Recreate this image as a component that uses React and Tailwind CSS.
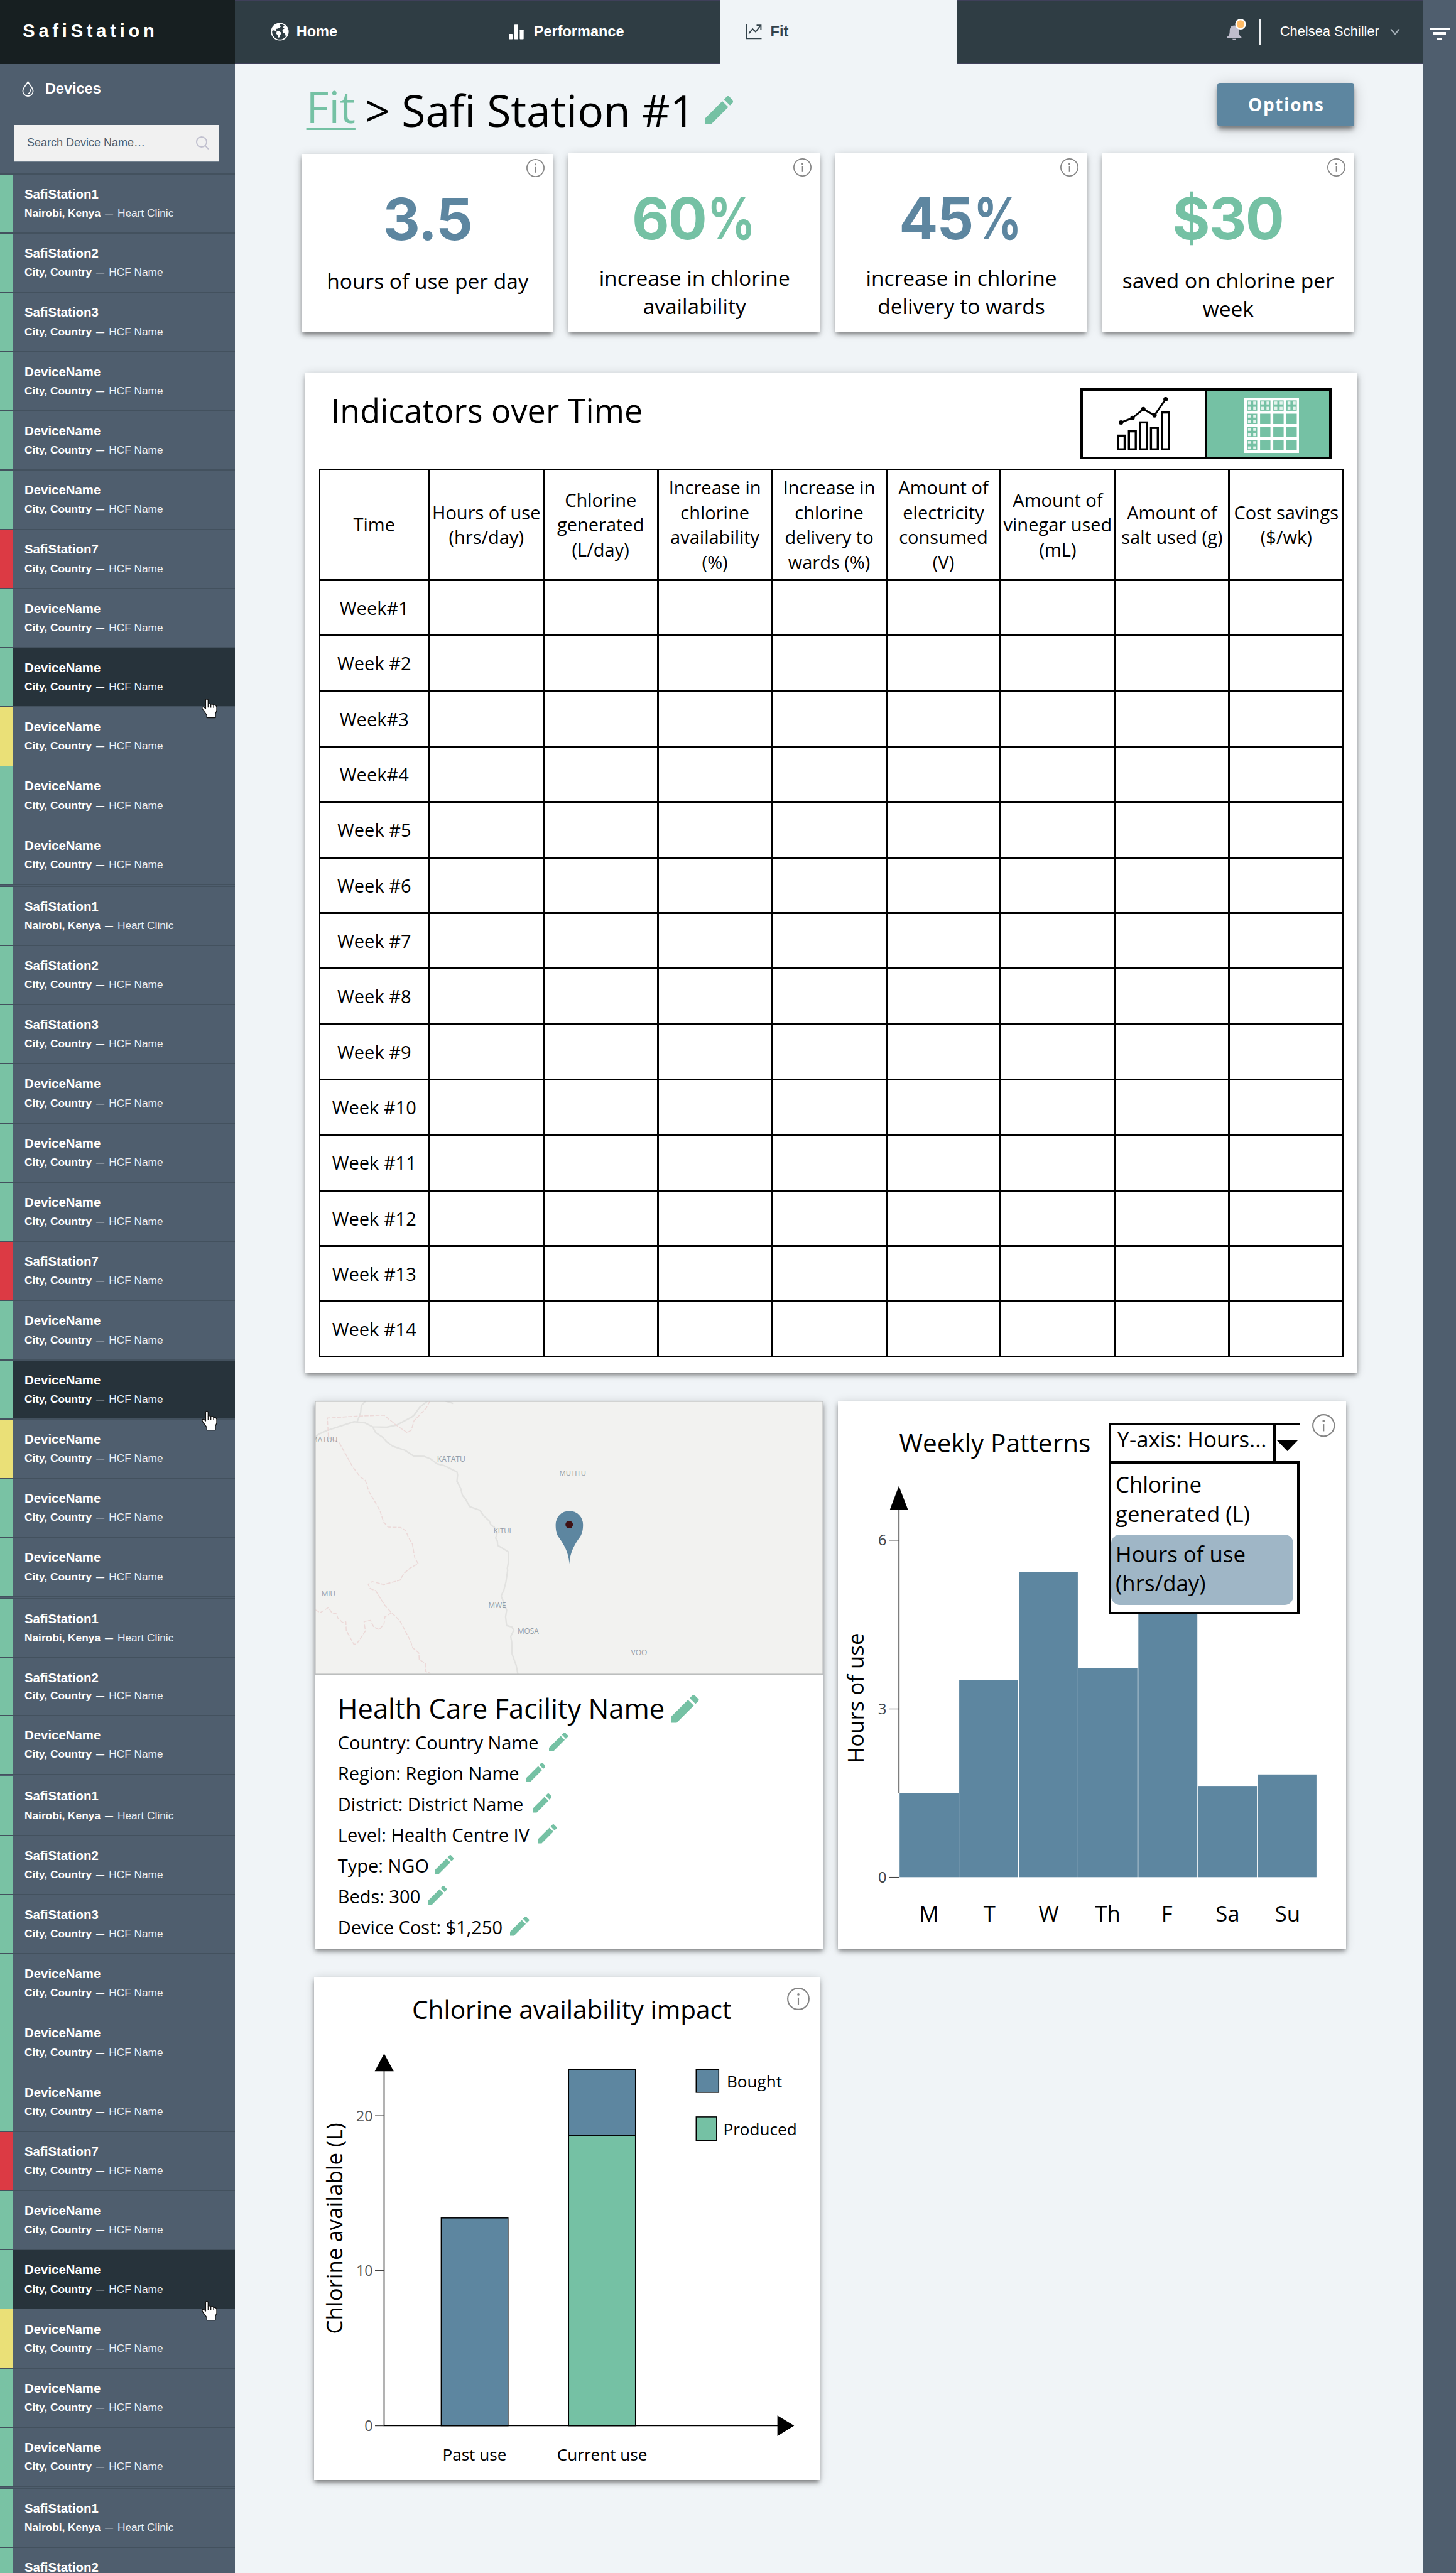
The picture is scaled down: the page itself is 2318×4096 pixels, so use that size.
import React from "react";

const BLUE = "#5d86a0";
const GREEN = "#75c1a4";
const OPEN = '"Open Sans", sans-serif';
const cardShadow =
  "shadow-[0_5px_7px_-1px_rgba(0,0,0,0.42),0_2px_14px_rgba(0,0,0,0.16)]";

/* ---------- icons ---------- */

function Pencil({ className = "" }) {
  return (
    <svg viewBox="3 3 18 18" className={"block shrink-0 " + className} fill={GREEN}>
      <path d="M3 17.25V21h3.75L17.81 9.94l-3.75-3.75L3 17.25z" />
      <path d="M20.71 7.04a1 1 0 0 0 0-1.41l-2.34-2.34a1 1 0 0 0-1.41 0l-1.83 1.83 3.75 3.75 1.83-1.83z" />
    </svg>
  );
}

function Info({ className = "" }) {
  return (
    <svg viewBox="0 0 29 29" className={"absolute block " + className} fill="none" stroke="#858585">
      <circle cx="14.5" cy="14.5" r="13.6" strokeWidth="1.7" />
      <path d="M14.5 12.8V21.8" strokeWidth="1.7" />
      <circle cx="14.5" cy="8.8" r="1.5" fill="#858585" stroke="none" />
    </svg>
  );
}

function Globe() {
  return (
    <svg viewBox="0 0 29 29" className="block h-[29px] w-[29px] shrink-0">
      <circle cx="14.5" cy="14.5" r="13.2" fill="none" stroke="#fff" strokeWidth="1.8" />
      <path
        fill="#fff"
        d="M3 9C5 5 8 2.500 12.500 1.800L15 3.200L13.800 5L16 6.200L14 8.200L12 8L10.200 10L8.500 9.600L7.600 11.600L9.400 13L8 13.600L5.500 12.200L3.200 12.600L1.800 13.500Z"
      />
      <path fill="#fff" d="M9.500 14L13 13.600L16.400 15.800L16.800 17.600L14.600 20L13.800 23.200L12.400 24L11 20.200L8.800 17.400Z" />
      <path
        fill="#fff"
        d="M20 6.500L22.600 5L25.500 8L27.400 12.500L27.400 17L25.200 20.500L23.600 21L22.800 17.200L19.600 16L18.400 13.200L19.600 10.600L22 9.600L19.800 8.600Z"
      />
    </svg>
  );
}

function Bars() {
  return (
    <svg viewBox="0 0 24 24" className="block h-[24px] w-[24px] shrink-0" fill="#fff">
      <rect x="0" y="15" width="6.200" height="8.600" rx="1" />
      <rect x="8.700" y="0.300" width="6.200" height="23.300" rx="1" />
      <rect x="17.500" y="8.200" width="6.200" height="15.400" rx="1" />
    </svg>
  );
}

function Trend() {
  return (
    <svg viewBox="0 0 26 24" className="block h-[24px] w-[26px] shrink-0" fill="none" stroke="#33424a">
      <path d="M1 0V22.200H25.500" strokeWidth="2" />
      <path d="M5 14.500L11.200 7.200L16 11.500L23.500 2" strokeWidth="2" />
      <path d="M17.500 1.200H24.400V8.500" strokeWidth="2" />
    </svg>
  );
}

function Hand() {
  return (
    <svg
      viewBox="0 0 17 22"
      className="absolute left-[320.5px] top-[82px] z-10 block h-[32px] w-[25px]"
      stroke="#111"
      strokeWidth="0.9"
      strokeLinejoin="round"
    >
      <path
        fill="#fff"
        d="M4.300 1.600Q4.300 0.500 5.600 0.500T7 1.600V5.600Q9.300 4.900 10 6.200Q12.300 5.600 13 7.200Q15.800 6.800 16.400 9.200V13.500L15 16.500V21H5.600V18.200L1.600 12.600Q0 10.400 0.700 9.400Q2 8.400 4.300 11Z"
      />
      <path fill="none" d="M7 5.600V9.800M10 6.200V10M13 7.200V10.200" />
    </svg>
  );
}

function GrowthIcon() {
  const bars = [
    [0, 59.9],
    [17.7, 53],
    [35.2, 38.8],
    [52.8, 47.6],
    [70.4, 23],
  ];
  const pts = [
    [6.7, 40.5],
    [25, 33.3],
    [42.2, 19.4],
    [60, 29.1],
    [77.7, 3.5],
  ];
  return (
    <svg viewBox="0 0 85 85" className="block h-[85px] w-[85px]">
      {bars.map(([x, y]) => (
        <rect key={x} x={x + 1.6} y={y + 1.6} width="10.9" height={83.2 - y - 1.6} fill="#fff" stroke="#000" strokeWidth="3.400" />
      ))}
      <polyline points={pts.map((p) => p.join(",")).join(" ")} fill="none" stroke="#000" strokeWidth="3" />
      {pts.map(([x, y]) => (
        <circle key={x} cx={x} cy={y} r="3.600" />
      ))}
    </svg>
  );
}

function GridIcon() {
  const at = [4, 25.1, 46.1, 67];
  return (
    <svg viewBox="0 0 87 88" className="block h-[88px] w-[87px]">
      <rect width="87" height="88" fill="#fff" />
      {at.map((y, r) =>
        at.map((x, c) => (
          <g key={r + "-" + c} transform={`translate(${x} ${y + 0.4})`}>
            <rect width="16.500" height="16.500" fill={GREEN} />
            {(r === 0 || c === 0) &&
              [1.8, 10.2].map((dy) =>
                [1.8, 10.2].map((dx) => (
                  <rect key={dx + "," + dy} x={dx} y={dy} width="4.600" height="4.500" fill="#e3f3ed" />
                ))
              )}
          </g>
        ))
      )}
    </svg>
  );
}

/* ---------- sidebar ---------- */

const full = [
  ["SafiStation1", "Nairobi, Kenya", "Heart Clinic", "g"],
  ["SafiStation2", "City, Country", "HCF Name", "g"],
  ["SafiStation3", "City, Country", "HCF Name", "g"],
  ["DeviceName", "City, Country", "HCF Name", "g"],
  ["DeviceName", "City, Country", "HCF Name", "g"],
  ["DeviceName", "City, Country", "HCF Name", "g"],
  ["SafiStation7", "City, Country", "HCF Name", "r"],
  ["DeviceName", "City, Country", "HCF Name", "g"],
  ["DeviceName", "City, Country", "HCF Name", "g", true],
  ["DeviceName", "City, Country", "HCF Name", "y"],
  ["DeviceName", "City, Country", "HCF Name", "g"],
  ["DeviceName", "City, Country", "HCF Name", "g"],
];
const groups = [
  full,
  full,
  [full[0], full[1], full[3]],
  full,
  [full[0], ["SafiStation2", null, null, "g"]],
];
const stripes = { g: "bg-[#79c2a4]", r: "bg-[#dc3a44]", y: "bg-[#eae077]" };

function Device({ item, short }) {
  const [name, place, clinic, status, hovered] = item;
  return (
    <div
      className={
        "relative flex shrink-0 flex-col " +
        (short ? "h-[91.35px]" : "h-[94.25px]") +
        (hovered ? " bg-[#27333b]" : "")
      }
    >
      <div className="h-[1.45px] shrink-0 bg-[#43515e]" />
      <div className="flex min-h-0 flex-1">
        <div className={"w-[20.2px] shrink-0 " + stripes[status]} />
        <div className="pl-[18.8px] pt-[19.2px] text-white">
          <div className="text-[20.4px] font-bold leading-[24px]">{name}</div>
          {place && (
            <div
              className={
                "flex whitespace-pre text-[17.3px] leading-[22px] " + (short ? "mt-[5.2px]" : "mt-[7.2px]")
              }
            >
              <span className="font-bold">{place}</span>
              <span className="w-[27px] scale-x-75 text-center">—</span>
              <span className="text-[#eef0f2]">{clinic}</span>
            </div>
          )}
        </div>
      </div>
      {hovered && <Hand />}
    </div>
  );
}

function Sidebar() {
  return (
    <aside className="flex h-full w-[374.3px] shrink-0 flex-col overflow-hidden bg-[#4f5e6e]">
      <div className="h-[101.5px] shrink-0 bg-[#171f21] pl-[36.3px] text-[29px] font-bold leading-[99px] tracking-[5.8px] text-white">
        SafiStation
      </div>
      <div className="flex h-[77.5px] shrink-0 items-center border-b border-[#4b5a69] pl-[35.4px] pt-[3px]">
        <svg viewBox="0 0 19 25" className="block h-[25px] w-[19px] shrink-0" fill="none" stroke="#fff">
          <path d="M9.500 1.200C7 6.500 1.400 10.500 1.400 16A8.100 8.100 0 0 0 17.600 16C17.600 10.500 12 6.500 9.500 1.200Z" strokeWidth="1.700" />
          <path d="M12.800 12.800C14.200 16.500 12.500 19.400 9.600 20.200" strokeWidth="1.600" />
        </svg>
        <span className="ml-[17.5px] text-[23.5px] font-bold leading-none text-white">Devices</span>
      </div>
      <div className="mb-[19.7px] ml-[23.4px] mt-[19.5px] flex h-[58px] w-[324.5px] shrink-0 items-center justify-between bg-[#f1f1f1] pl-[19.5px] pr-[15px] shadow-[0_1px_0_#71808e]">
        <span className="text-[18px] text-[#4f5e6e]">Search Device Name…</span>
        <svg viewBox="0 0 21 21" className="block h-[21px] w-[21px]" fill="none" stroke="#c1c0cf" strokeWidth="2">
          <circle cx="9" cy="9" r="8" />
          <path d="M14.500 14.500L20 20.400" />
        </svg>
      </div>
      {groups.map((g, gi) => (
        <React.Fragment key={gi}>
          {g.map((item, i) => (
            <Device key={i} item={item} short={gi === 2 && i === 1} />
          ))}
          {gi < 4 && (
            <div className="h-[2.9px] shrink-0">
              <div className="h-[1.45px] bg-[#43515e]" />
            </div>
          )}
        </React.Fragment>
      ))}
    </aside>
  );
}

/* ---------- header ---------- */

function Header() {
  return (
    <header className="flex h-[101.5px] shrink-0 text-[23.5px] font-bold text-white">
      <div className="flex w-[772.8px] border-y border-[#3f405a] bg-[#2f3d44]">
        <div className="flex w-[436px] items-center pl-[56.5px]">
          <Globe />
          <span className="ml-[12px]">Home</span>
        </div>
        <div className="flex items-center">
          <Bars />
          <span className="ml-[15.5px]">Performance</span>
        </div>
      </div>
      <div className="flex w-[377.1px] items-center pl-[40px] text-[#33424a]">
        <Trend />
        <span className="ml-[13.5px]">Fit</span>
      </div>
      <div className="flex flex-1 items-center border-y border-[#3f405a] bg-[#2f3d44] pl-[428.5px] font-normal">
        <svg viewBox="0 0 31 36" className="mb-[7px] block h-[36px] w-[31px] shrink-0">
          <path
            fill="#bfbdcc"
            d="M12 11.500C7.500 11.500 5 14.500 4.800 19C4.700 24 4.300 27 2.200 28.500Q0.400 29 0.400 31.300H23.600Q23.600 29 21.800 28.500C19.700 27 19.300 24 19.200 19C19 14.500 16.500 11.500 12 11.500ZM9 32.800H15Q14.500 35 12 35T9 32.800Z"
          />
          <circle cx="22" cy="9.500" r="8.600" fill="#fff" />
          <circle cx="22" cy="9.500" r="6.300" fill="#ffbb66" />
        </svg>
        <div className="ml-[21.5px] h-[40.5px] w-[2px] bg-[#eef1f3]" />
        <span className="ml-[30.5px] text-[21.9px]">Chelsea Schiller</span>
        <svg viewBox="0 0 16 11" className="ml-[17.5px] block h-[11px] w-[16px]" fill="none" stroke="#a3aeb6" strokeWidth="2.400">
          <path d="M1 1.500L8 9L15 1.500" />
        </svg>
      </div>
    </header>
  );
}

/* ---------- stat cards ---------- */

function Stat({ value, percent, lines, tone, className = "", capClass }) {
  return (
    <div className={"relative h-[284.7px] w-[400px] bg-white text-center " + cardShadow + " " + className}>
      <Info className="right-[13px] top-[8.8px] h-[29px] w-[29px]" />
      <div
        className={
          "flex justify-center pt-[56px] font-['Inter'] text-[92px] font-[650] leading-[96px] " + tone
        }
      >
        <span className={percent ? "tracking-[-2px]" : "tracking-[-1.5px]"}>{value}</span>
        {percent && <span className="ml-[2px] -mr-[15px] block origin-left scale-x-[0.82]">%</span>}
      </div>
      <div className={"pl-px text-[33.5px] leading-[44.7px] text-black " + capClass}>
        {lines.map((l) => (
          <div key={l}>{l}</div>
        ))}
      </div>
    </div>
  );
}

/* ---------- table ---------- */

const heads = [
  ["Time"],
  ["Hours of use", "(hrs/day)"],
  ["Chlorine", "generated", "(L/day)"],
  ["Increase in", "chlorine", "availability", "(%)"],
  ["Increase in", "chlorine", "delivery to", "wards (%)"],
  ["Amount of", "electricity", "consumed", "(V)"],
  ["Amount of", "vinegar used", "(mL)"],
  ["Amount of", "salt used (g)"],
  ["Cost savings", "($/wk)"],
];
const weeks = [
  "Week#1", "Week #2", "Week#3", "Week#4", "Week #5", "Week #6", "Week #7",
  "Week #8", "Week #9", "Week #10", "Week #11", "Week #12", "Week #13", "Week #14",
];

function TableCard() {
  return (
    <section className={"ml-[111.4px] mt-[64.8px] h-[1592px] w-[1675px] shrink-0 bg-white " + cardShadow}>
      <div className="flex h-[154px] items-start justify-between pl-[41px] pr-[41px]">
        <h2 className="mt-[30.3px] text-[52.2px] leading-[60px]">Indicators over Time</h2>
        <div className="mt-[25px] flex h-[113.4px] w-[400px] border-[4px] border-black">
          <div className="flex flex-1 items-center justify-center border-r-[4px] border-black">
            <GrowthIcon />
          </div>
          <div className="flex w-[194px] items-center justify-center bg-[#75c1a4] pl-[12px] pt-[4px]">
            <GridIcon />
          </div>
        </div>
      </div>
      <div className="ml-[22.6px] grid w-[1630.5px] grid-cols-[172px_repeat(8,minmax(0,1fr))] gap-[3px] bg-black p-[1.5px] text-[29px] leading-[39.4px]">
        {heads.map((h, i) => (
          <div key={i} className="flex h-[173.4px] flex-col items-center justify-center whitespace-nowrap bg-white">
            {h.map((l) => (
              <div key={l}>{l}</div>
            ))}
          </div>
        ))}
        {weeks.map((w) =>
          heads.map((_, c) => (
            <div key={w + c} className="flex h-[85.35px] items-center justify-center bg-white">
              {c === 0 ? w : null}
            </div>
          ))
        )}
      </div>
    </section>
  );
}

/* ---------- map card ---------- */

const KX = 0.5456;
const KY = 0.5826;
const mapLabels = [
  ["MATUU", 29, 159, 12],
  ["KATATU", 397, 212, 12.2],
  ["MUTITU", 754, 250, 11.4],
  ["KITUI", 562, 407, 11.4],
  ["MIU", 60, 579, 11.6],
  ["MWE", 547, 611, 11.8],
  ["MOSA", 632, 681, 11.8],
  ["VOO", 963, 740, 12],
];

function MapView() {
  return (
    <svg viewBox="0 0 810 436" className="block h-[436px] w-[810px]">
      <rect width="810" height="436" fill="#f2f2f0" />
      <g transform={`scale(${KX} ${KY}) translate(-40 -45)`} fill="none" strokeLinejoin="round">
        <g stroke="#e2e2e0" strokeWidth="4.200">
          <path d="M40 145L52 136L76 126L155 102L186 105L209 116L250 117L280 111L322 90L330 84L346 63L370 45" />
          <path d="M164 102L174 78L176 58L188 46M420 45L444 52" />
          <path d="M209 116L218 132L238 144L249 156L268 169L303 180L329 196L360 197L377 203L397 217L418 222L455 239L457 247L455 265L466 284L471 303L480 313L492 334L522 344L533 359L549 373L555 385L564 390L572 408L568 420L573 428L574 440L604 457L606 462L605 487L602 503L603 508L598 540L592 562L584 578L590 592L600 617L597 635L600 659L615 663L621 672L612 689L615 705L616 737L628 768L633 792" />
        </g>
        <g stroke="#ecd9d8" strokeWidth="2.800" strokeDasharray="12 4">
          <path d="M376 46L366 64L346 84L330 99L322 125L310 132L280 113L242 84L160 87L77 92L80 145L112 160L150 224L172 252L188 263L198 292L230 344L241 376L254 390L290 391L306 400L313 417L325 436L332 474L342 490L318 502L300 517L289 535L242 547L208 539L196 546L202 558L218 564L244 603L263 623L288 645L320 702L326 720L344 734L345 752L363 762L363 784L378 790" />
          <path d="M42 616L56 624L80 610L90 624L103 627L108 639L122 651L131 649L132 672L154 710L162 710L188 674L184 648L203 645L212 663L228 670L242 656L245 635L263 625" />
        </g>
      </g>
      <g fill="#949da7" fontFamily={OPEN} fontWeight="500">
        {mapLabels.map(([t, x, y, s]) => (
          <text key={t} x={(x - 40) * KX} y={(y - 45) * KY} fontSize={s}>
            {t}
          </text>
        ))}
      </g>
      <path
        fill={BLUE}
        d="M405.400 259.500C404.500 240 395 226 388 216.500C385 212 383.600 206 383.600 197A21.800 21.800 0 0 1 427.200 197C427.200 206 425.500 212 422.500 216.500C415.500 226 406.300 240 405.400 259.500Z"
      />
      <circle cx="405.200" cy="197" r="6" fill="#3f1114" />
      <rect x="0.800" y="0.800" width="808.400" height="434.400" fill="none" stroke="#bcbebe" strokeWidth="1.600" />
    </svg>
  );
}

const facts = [
  ["Country: Country Name", "ml-[16px]"],
  ["Region: Region Name", "ml-[11px]"],
  ["District: District Name", "ml-[14.5px]"],
  ["Level: Health Centre IV", "ml-[13.5px]"],
  ["Type: NGO", "ml-[9.5px]"],
  ["Beds: 300", "ml-[12px]"],
  ["Device Cost: $1,250", "ml-[12px]"],
];

function FacilityCard() {
  return (
    <section className={"h-[871.8px] w-[810.2px] shrink-0 bg-white " + cardShadow}>
      <MapView />
      <div className="flex items-start pl-[36.8px] pt-[24.4px]">
        <h3 className="text-[43.5px] leading-[60px]">Health Care Facility Name</h3>
        <Pencil className="ml-[10px] mt-[8px] h-[44.5px] w-[44.5px]" />
      </div>
      {facts.map(([t, m]) => (
        <div key={t} className="flex items-start pl-[37.2px] text-[29px] leading-[48.9px]">
          <span>{t}</span>
          <Pencil className={"mt-[7.2px] h-[30.5px] w-[30.5px] " + m} />
        </div>
      ))}
    </section>
  );
}

/* ---------- weekly chart ---------- */

const days = [
  ["M", 98.2, 624.4, 144.8],
  ["T", 193.1, 444.5, 241.3],
  ["W", 288, 272.8, 335.6],
  ["Th", 382.9, 425, 429.6],
  ["F", 478.3, 320, 523.7],
  ["Sa", 573.2, 613.1, 620.5],
  ["Su", 668, 594.8, 716],
];

function WeeklyCard() {
  return (
    <section className={"relative h-[871.8px] w-[809px] shrink-0 bg-white " + cardShadow}>
      <svg viewBox="0 0 809 871" className="block h-[871px] w-[809px]" fontFamily={OPEN}>
        <text x="97.500" y="82" fontSize="40.600">Weekly Patterns</text>
        <path d="M97 135.500L111.600 173.500H82.600Z" />
        <path d="M97.300 172V624" stroke="#000" strokeWidth="1.600" />
        {[
          ["6", 221.8],
          ["3", 490.5],
          ["0", 758.6],
        ].map(([t, y]) => (
          <g key={t}>
            <path d={`M82 ${y}H97.500`} stroke="#444" strokeWidth="1.300" />
            <text x="77.500" y={y + 8.6} fontSize="23.500" fill="#444" textAnchor="end">{t}</text>
          </g>
        ))}
        {days.map(([d, x, y, c]) => (
          <g key={d}>
            <rect x={x} y={y} width="93.900" height={758.3 - y} fill={BLUE} />
            <text x={c} y="829" fontSize="34.800" textAnchor="middle">{d}</text>
          </g>
        ))}
        <text transform="translate(41 473) rotate(-90)" fontSize="34.800" textAnchor="middle">Hours of use</text>
      </svg>
      <Info className="right-[17.4px] top-[20.6px] h-[36.5px] w-[36.5px]" />
      <div className="absolute left-[431px] top-[35px] w-[304px] text-[34.8px] leading-[46.4px]">
        <div className="flex h-[60px] border-t-[4px] border-black bg-white">
          <div className="w-[266.3px] whitespace-nowrap border-x-[4px] border-black pl-[9.5px] leading-[43.5px]">
            Y-axis: Hours...
          </div>
          <svg viewBox="0 0 35 18" className="ml-[1px] mt-[23.5px] block h-[18px] w-[35px]">
            <path d="M0 0H35L17.500 18Z" />
          </svg>
        </div>
        <div className="h-[245.4px] border-[4px] border-t-[5px] border-black bg-white">
          <div className="h-[112.6px] pl-[7px] pt-[10.5px]">
            Chlorine
            <br />
            generated (L)
          </div>
          <div className="h-[112.5px] w-[289.5px] rounded-[14px] bg-[#9fb6c6] pl-[7px] pt-[8px]">
            Hours of use
            <br />
            (hrs/day)
          </div>
        </div>
      </div>
    </section>
  );
}

/* ---------- chlorine chart ---------- */

function ChlorineCard() {
  return (
    <section className={"relative ml-[126px] mt-[45.1px] h-[800.7px] w-[804.8px] shrink-0 bg-white " + cardShadow}>
      <svg viewBox="0 0 804 800" className="block h-[800px] w-[804px]" fontFamily={OPEN}>
        <text x="156" y="67" fontSize="40.600">Chlorine availability impact</text>
        <path d="M111.500 122L126.800 150.300H96.600Z" />
        <path d="M764.300 714.600L737.600 698.300V731Z" />
        <path d="M111.500 149V714.500H738" fill="none" stroke="#000" strokeWidth="1.600" />
        {[
          ["20", 221.2],
          ["10", 467.6],
          ["0", 714.5],
        ].map(([t, y]) => (
          <g key={t}>
            <path d={`M97 ${y}H111.300`} stroke="#444" strokeWidth="1.500" />
            <text x="93.600" y={y + 8.4} fontSize="23.200" fill="#555" textAnchor="end">{t}</text>
          </g>
        ))}
        <g stroke="#000" strokeWidth="1.500">
          <rect x="202.400" y="383.800" width="106.400" height="330.800" fill={BLUE} />
          <rect x="405.300" y="147.400" width="106.400" height="105.500" fill={BLUE} />
          <rect x="405.300" y="252.900" width="106.400" height="461.700" fill={GREEN} />
          <rect x="608.300" y="147.400" width="36" height="36.500" fill={BLUE} />
          <rect x="608.300" y="222.900" width="32.500" height="37.700" fill={GREEN} />
        </g>
        <g fontSize="26.100">
          <text x="657" y="176.200">Bought</text>
          <text x="651.500" y="252.300">Produced</text>
          <text x="255.400" y="770.200" textAnchor="middle">Past use</text>
          <text x="458.600" y="770.200" textAnchor="middle">Current use</text>
        </g>
        <text transform="translate(44.800 400.300) rotate(-90)" fontSize="34.800" textAnchor="middle">Chlorine available (L)</text>
      </svg>
      <Info className="right-[16.4px] top-[17.6px] h-[36px] w-[36px]" />
    </section>
  );
}

export default function App() {
  return (
    <div className="flex h-[4096px] w-[2318px] overflow-hidden bg-[#f0f4f7] font-['Liberation_Sans',Arial,sans-serif]">
      <Sidebar />
      <div className="flex min-w-0 flex-1 flex-col">
        <Header />
        <main className="flex flex-col font-['Open_Sans',sans-serif] text-black">
          <div className="flex h-[142px] shrink-0 items-start pl-[113.3px] text-[69.6px] leading-[70px]">
            <a className="mt-[32.5px] text-[#75c1a4] underline decoration-[3px] underline-offset-[8px]">Fit</a>
            <h1 className="ml-[15.5px] mt-[38.6px] whitespace-nowrap">&gt; Safi Station #1</h1>
            <Pencil className="ml-[15px] mt-[51px] h-[45.5px] w-[45.5px]" />
            <button className="ml-auto mr-[109.5px] mt-[30.6px] h-[68.5px] w-[217.7px] rounded-[4px] bg-[#5d86a0] pl-[1.6px] text-[28px] font-bold leading-[66px] tracking-[1.6px] text-white shadow-[0_6px_7px_-1px_rgba(0,0,0,0.42),0_4px_22px_rgba(0,0,0,0.2)]">
              Options
            </button>
          </div>
          <div className="ml-[106.1px] flex h-[284.7px] shrink-0 gap-[24.8px]">
            <Stat className="mt-px" value="3.5" tone="text-[#5d86a0]" capClass="mt-[28px]" lines={["hours of use per day"]} />
            <Stat value="60" percent tone="text-[#75c1a4]" capClass="mt-[24.8px]" lines={["increase in chlorine", "availability"]} />
            <Stat value="45" percent tone="text-[#5d86a0]" capClass="mt-[24.8px]" lines={["increase in chlorine", "delivery to wards"]} />
            <Stat value="$30" tone="text-[#75c1a4]" capClass="mt-[28.4px]" lines={["saved on chlorine per", "week"]} />
          </div>
          <TableCard />
          <div className="ml-[126.3px] mt-[45px] flex shrink-0 gap-[23.3px]">
            <FacilityCard />
            <WeeklyCard />
          </div>
          <ChlorineCard />
        </main>
      </div>
      <div className="flex w-[52.6px] shrink-0 flex-col items-center bg-[#4f5e6e] pt-[43.5px]">
        <div className="h-[3px] w-[32px] bg-white" />
        <div className="mt-[4.5px] h-[4px] w-[21.5px] bg-white" />
        <div className="mt-[4.5px] h-[4px] w-[8px] bg-white" />
      </div>
    </div>
  );
}
